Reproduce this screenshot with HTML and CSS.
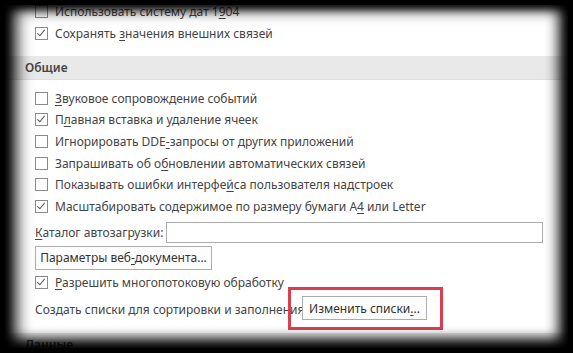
FILE: index.html
```html
<!DOCTYPE html>
<html lang="ru">
<head>
  <meta charset="UTF-8">
  <title>Параметры Excel</title>
  <link rel="stylesheet" href="styles.css">
</head>
<body>

  <div class="options">
    <div class="group top-group">
      <label class="check"><span class="box"></span><span>Использовать систему дат 1<u>9</u>04</span></label>
      <label class="check"><span class="box on"></span><span>Сохранять <u>з</u>начения внешних связей</span></label>
    </div>

    <div class="section">Общие</div>

    <div class="group">
      <label class="check"><span class="box"></span><span><u>З</u>вуковое сопровождение событий</span></label>
      <label class="check"><span class="box on"></span><span>П<u>л</u>авная вставка и удаление ячеек</span></label>
      <label class="check"><span class="box"></span><span>Игнорировать DDE<u>-</u>запросы от других приложений</span></label>
      <label class="check"><span class="box"></span><span>Запрашивать об о<u>б</u>новлении автоматических связей</span></label>
      <label class="check"><span class="box"></span><span>Показывать ошибки интерфе<u>й</u>са пользователя надстроек</span></label>
      <label class="check"><span class="box on"></span><span>Масштабировать содержимое по размеру бумаги А<u>4</u> или Letter</span></label>

      <div class="field-row">
        <span class="field-label"><u>К</u>аталог автозагрузки:</span>
        <span class="text-input"></span>
      </div>

      <div class="btn-row">
        <button class="btn wide">Параметры веб<u>-</u>документа...</button>
      </div>

      <label class="check after-btn"><span class="box on"></span><span><u>Р</u>азрешить многопотоковую обработку</span></label>

      <div class="lists-row">
        <span class="lists-label">Создать списки для сортировки и заполнения:</span>
        <span class="highlight"><button class="btn lists">Изменить списки<u>.</u>..</button></span>
      </div>
    </div>

    <div class="section">Данные</div>
  </div>

  <div class="vignette"></div>

</body>
</html>
```

FILE: styles.css
```css
body {
  margin: 0;
  background-color: #000;
  font-family: 'Noto Sans', 'Open Sans', sans-serif;
  font-size: 12px;
  color: #444;
  overflow: hidden;
}

.options {
  background-color: #fff;
  width: 573px;
  height: 353px;
  padding-top: 1px;
  box-sizing: border-box;
}

u {
  text-decoration: underline;
  text-underline-offset: 2px;
}

.group {
  padding: 0 0 0 35px;
}

.top-group {
  margin-bottom: 12px;
}

.section {
  background-color: #e9e9e9;
  border-bottom: 1px solid #e0e0e0;
  height: 23px;
  line-height: 23px;
  padding-left: 25px;
  font-weight: 600;
  font-size: 12px;
  margin: 0 0 7px 0;
}

.check {
  display: flex;
  align-items: center;
  height: 21.7px;
  white-space: nowrap;
}

.check.after-btn {
  margin-top: 2px;
}

.box {
  width: 11px;
  height: 11px;
  border: 1px solid #8a8a8a;
  background-color: #fff;
  margin-right: 7px;
  flex: none;
  position: relative;
}

.box.on::after {
  content: '';
  position: absolute;
  left: 3px;
  top: 0px;
  width: 3px;
  height: 7px;
  border-right: 1.3px solid #555;
  border-bottom: 1.3px solid #555;
  transform: rotate(40deg);
}

.field-row {
  display: flex;
  align-items: center;
  height: 23px;
  margin-top: 3px;
}

.field-label {
  width: 131px;
  white-space: nowrap;
}

.text-input {
  width: 375px;
  height: 19px;
  border: 1px solid #ababab;
  background-color: #fff;
}

.btn-row {
  margin-top: 2px;
}

.btn {
  font-family: inherit;
  font-size: 12px;
  color: #333;
  background-color: #fdfdfd;
  border: 1px solid #adadad;
  height: 24px;
  padding: 0;
  border-radius: 0;
  white-space: nowrap;
}

.btn.wide {
  width: 177px;
}

.btn.lists {
  width: 125px;
}

.lists-row {
  display: flex;
  align-items: center;
  height: 24px;
  margin-top: 3px;
}

.lists-label {
  width: 267px;
  white-space: nowrap;
  padding-top: 3px;
}

.highlight {
  position: relative;
  display: inline-flex;
}

.highlight::after {
  content: '';
  position: absolute;
  left: -14px;
  right: -16px;
  top: -9px;
  bottom: -10px;
  border: 3px solid #db3f4f;
}

.section:last-child {
  margin-top: 13px;
}

.vignette {
  position: fixed;
  left: 0;
  top: 0;
  right: 0;
  bottom: 0;
  pointer-events: none;
  box-shadow: inset 0 0 0 5px #000, inset 8px 0 16px 8px #000, inset -6px -4px 14px 8px #000, inset 0 2px 10px 4px #000;
}
```
